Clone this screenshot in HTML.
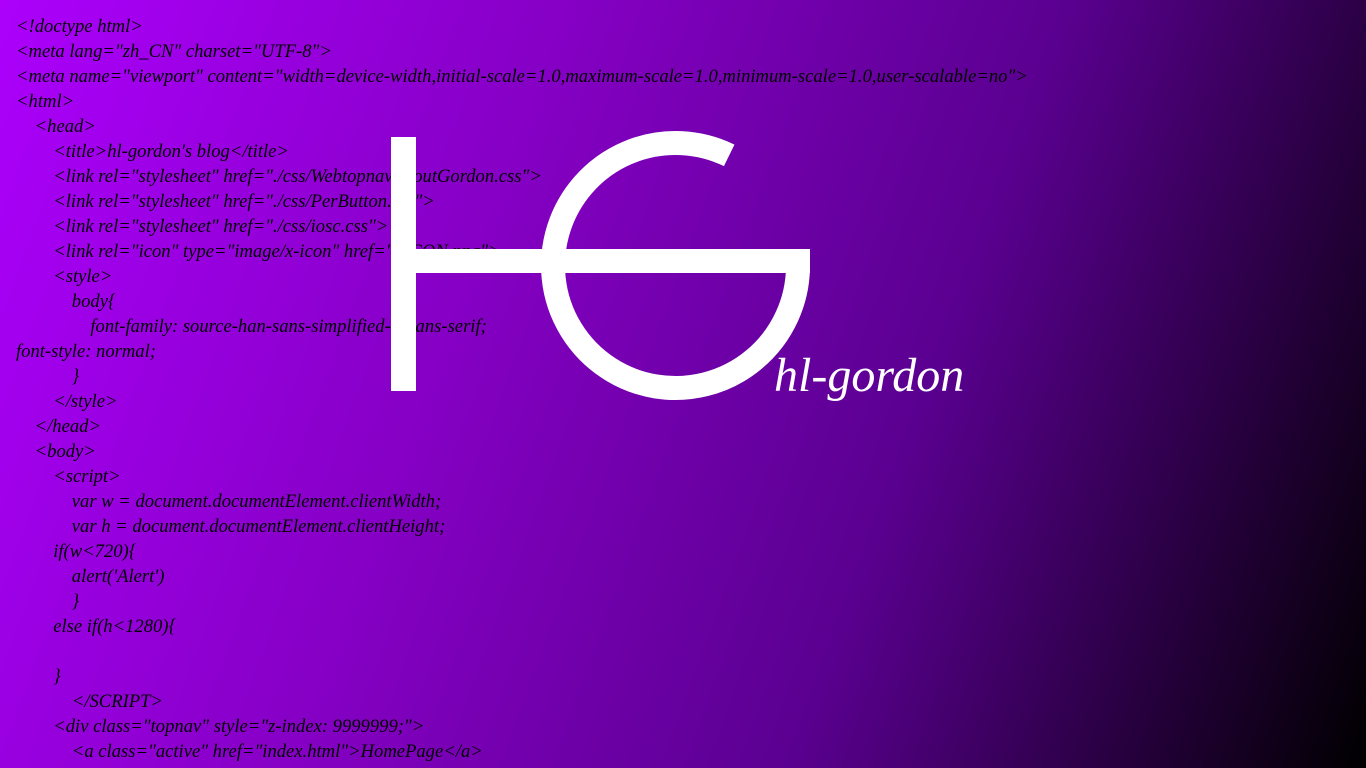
<!DOCTYPE html>
<html><head><meta charset="utf-8"><style>
html,body{margin:0;padding:0;width:1366px;height:768px;overflow:hidden}
body{background:linear-gradient(110deg,#ac00fc 0%,#8500c4 35%,#5a0090 65%,#000 100%);position:relative}
.code{position:absolute;left:16px;top:14px;font-family:"Liberation Serif",serif;font-style:italic;font-size:18.6px;color:#000;margin:0}
.code div{height:25px;line-height:25px;white-space:pre}
.i1{padding-left:18.6px}.i2{padding-left:37.2px}.i3{padding-left:55.8px}.i4{padding-left:74.4px}
svg{position:absolute;left:0;top:0}
.name{position:absolute;left:774px;top:346px;font-family:"Liberation Serif",serif;font-style:italic;font-size:48px;line-height:60px;color:#fff;white-space:nowrap}
</style></head><body>
<div class="code"><div>&lt;!doctype html&gt;</div><div>&lt;meta lang="zh_CN" charset="UTF-8"&gt;</div><div>&lt;meta name="viewport" content="width=device-width,initial-scale=1.0,maximum-scale=1.0,minimum-scale=1.0,user-scalable=no"&gt;</div><div>&lt;html&gt;</div><div class="i1">&lt;head&gt;</div><div class="i2">&lt;title&gt;hl-gordon's blog&lt;/title&gt;</div><div class="i2">&lt;link rel="stylesheet" href="./css/WebtopnavAboutGordon.css"&gt;</div><div class="i2">&lt;link rel="stylesheet" href="./css/PerButton.css"&gt;</div><div class="i2">&lt;link rel="stylesheet" href="./css/iosc.css"&gt;</div><div class="i2">&lt;link rel="icon" type="image/x-icon" href="./ICON.png"&gt;</div><div class="i2">&lt;style&gt;</div><div class="i3">body{</div><div class="i4">font-family: source-han-sans-simplified-c, sans-serif;</div><div>font-style: normal;</div><div class="i3">}</div><div class="i2">&lt;/style&gt;</div><div class="i1">&lt;/head&gt;</div><div class="i1">&lt;body&gt;</div><div class="i2">&lt;script&gt;</div><div class="i3">var w = document.documentElement.clientWidth;</div><div class="i3">var h = document.documentElement.clientHeight;</div><div class="i2">if(w&lt;720){</div><div class="i3">alert('Alert')</div><div class="i3">}</div><div class="i2">else if(h&lt;1280){</div><div></div><div class="i2">}</div><div class="i3">&lt;/SCRIPT&gt;</div><div class="i2">&lt;div class="topnav" style="z-index: 9999999;"&gt;</div><div class="i3">&lt;a class="active" href="index.html"&gt;HomePage&lt;/a&gt;</div></div>
<svg width="1366" height="768" viewBox="0 0 1366 768">
<rect x="391" y="137" width="25" height="254" fill="#fff"/>
<rect x="416" y="249" width="394" height="24" fill="#fff"/>
<path d="M729.2 155.4 A122.5 122.5 0 1 0 798 268" fill="none" stroke="#fff" stroke-width="24"/>
</svg>
<div class="name">hl-gordon</div>
</body></html>
